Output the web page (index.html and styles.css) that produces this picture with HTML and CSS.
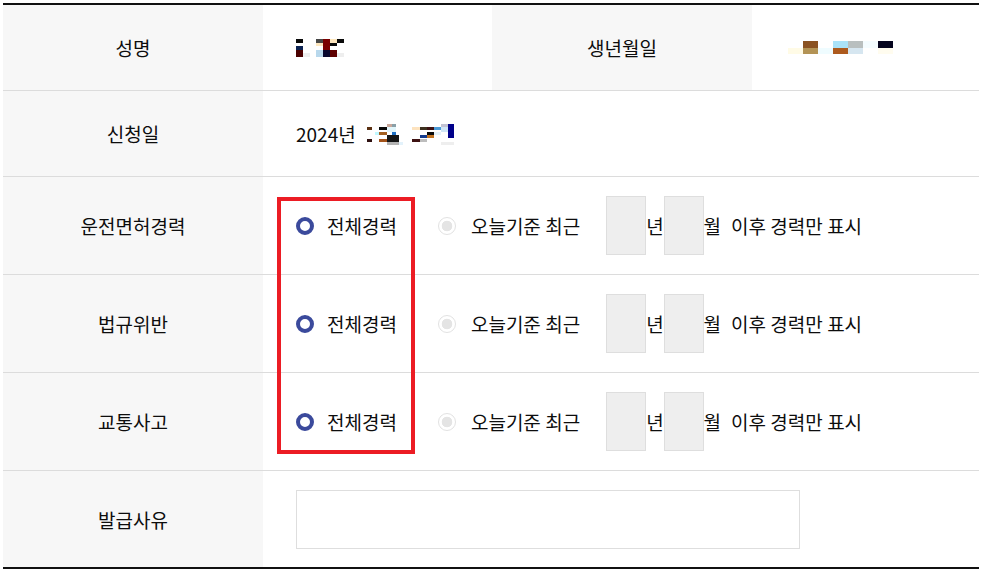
FILE: index.html
```html
<!DOCTYPE html>
<html lang="ko">
<head>
<meta charset="utf-8">
<title>운전경력증명서 발급</title>
<link rel="stylesheet" href="styles.css">
</head>
<body>
<div class="sheet">
  <div class="row row-short">
    <div class="th">성명</div>
    <div class="td">
      <svg class="mosaic" width="48" height="18" viewBox="0 0 48 18">
        <rect x="0" y="0" width="7" height="4" fill="#0a0a0a"/>
        <rect x="0" y="7" width="7" height="4" fill="#0b2252"/>
        <rect x="0" y="11" width="7" height="7" fill="#4a0000"/>
        <rect x="7" y="14" width="7" height="4" fill="#eeeeee"/>
        <rect x="20" y="0" width="7" height="4" fill="#474747"/>
        <rect x="20" y="4" width="7" height="3" fill="#fde6bd"/>
        <rect x="20" y="11" width="7" height="7" fill="#b8d8ec"/>
        <rect x="27" y="0" width="7" height="11" fill="#7a0000"/>
        <rect x="27" y="11" width="7" height="7" fill="#07072e"/>
        <rect x="34" y="0" width="7" height="4" fill="#fde6bd"/>
        <rect x="34" y="4" width="7" height="3" fill="#0a0a0a"/>
        <rect x="34" y="11" width="7" height="7" fill="#5e0000"/>
        <rect x="41" y="0" width="7" height="4" fill="#0a0a0a"/>
        <rect x="41" y="14" width="7" height="4" fill="#eeeeee"/>
      </svg>
    </div>
    <div class="th">생년월일</div>
    <div class="td td-birth">
      <svg class="mosaic" width="105" height="13" viewBox="0 0 105 13">
        <rect x="0" y="7" width="15" height="6" fill="#fffbe6"/>
        <rect x="15" y="0" width="15" height="7" fill="#8b5222"/>
        <rect x="15" y="7" width="15" height="6" fill="#b39355"/>
        <rect x="30" y="7" width="15" height="6" fill="#effcff"/>
        <rect x="45" y="0" width="15" height="7" fill="#aae2f8"/>
        <rect x="45" y="7" width="15" height="6" fill="#ad5a1e"/>
        <rect x="60" y="0" width="15" height="7" fill="#b9bfbf"/>
        <rect x="60" y="7" width="15" height="6" fill="#d6e6f0"/>
        <rect x="75" y="0" width="15" height="7" fill="#f4fcff"/>
        <rect x="90" y="0" width="15" height="7" fill="#05051e"/>
        <rect x="90" y="7" width="15" height="6" fill="#fffcef"/>
      </svg>
    </div>
  </div>

  <div class="row row-short">
    <div class="th">신청일</div>
    <div class="td span3">
      <span class="date-text">2024년</span>
      <svg class="mosaic mosaic-date" width="87" height="22" viewBox="0 0 87 22">
        <rect x="0" y="3" width="5" height="3" fill="#5a3012"/>
        <rect x="0" y="15" width="5" height="3" fill="#2e1010"/>
        <rect x="8" y="8" width="4" height="3" fill="#c2f8ff"/>
        <rect x="12" y="3" width="8" height="3" fill="#0a0a0a"/>
        <rect x="12" y="8" width="8" height="3" fill="#a36021"/>
        <rect x="12" y="15" width="8" height="3" fill="#a3531a"/>
        <rect x="20" y="0" width="5" height="3" fill="#c9a79a"/>
        <rect x="25" y="0" width="4" height="3" fill="#8aa0a8"/>
        <rect x="20" y="3" width="9" height="5" fill="#e2f6fb"/>
        <rect x="25" y="8" width="4" height="3" fill="#1d6fc4"/>
        <rect x="20" y="11" width="12" height="7" fill="#151515"/>
        <rect x="20" y="18" width="12" height="3" fill="#b3b3b3"/>
        <rect x="32" y="18" width="4" height="3" fill="#e3f2fb"/>
        <rect x="45" y="3" width="8" height="3" fill="#fde3bf"/>
        <rect x="45" y="15" width="8" height="3" fill="#3e1212"/>
        <rect x="53" y="3" width="7" height="3" fill="#3e3220"/>
        <rect x="53" y="11" width="7" height="3" fill="#133a8e"/>
        <rect x="53" y="15" width="7" height="3" fill="#bdbdbd"/>
        <rect x="60" y="3" width="7" height="3" fill="#3e1212"/>
        <rect x="60" y="8" width="7" height="3" fill="#0a0a0a"/>
        <rect x="60" y="11" width="7" height="3" fill="#c27422"/>
        <rect x="67" y="3" width="7" height="3" fill="#4a9ad6"/>
        <rect x="67" y="8" width="7" height="3" fill="#e4f2fa"/>
        <rect x="74" y="0" width="7" height="3" fill="#c3c3d3"/>
        <rect x="74" y="3" width="7" height="5" fill="#cfe6f6"/>
        <rect x="81" y="0" width="6" height="14" fill="#00008a"/>
        <rect x="74" y="18" width="13" height="3" fill="#eeeeee"/>
      </svg>
    </div>
  </div>

  <div class="row row-tall">
    <div class="th">운전면허경력</div>
    <div class="td span3 opts">
      <label class="opt opt-all"><input type="radio" name="license" checked><span>전체경력</span></label>
      <label class="opt opt-recent"><input type="radio" name="license" disabled><span>오늘기준 최근</span></label>
      <span class="box"></span><span>년</span><span class="box"></span><span>월</span><span class="tail">이후 경력만 표시</span>
    </div>
  </div>

  <div class="row row-tall">
    <div class="th">법규위반</div>
    <div class="td span3 opts">
      <label class="opt opt-all"><input type="radio" name="violation" checked><span>전체경력</span></label>
      <label class="opt opt-recent"><input type="radio" name="violation" disabled><span>오늘기준 최근</span></label>
      <span class="box"></span><span>년</span><span class="box"></span><span>월</span><span class="tail">이후 경력만 표시</span>
    </div>
  </div>

  <div class="row row-tall">
    <div class="th">교통사고</div>
    <div class="td span3 opts">
      <label class="opt opt-all"><input type="radio" name="accident" checked><span>전체경력</span></label>
      <label class="opt opt-recent"><input type="radio" name="accident" disabled><span>오늘기준 최근</span></label>
      <span class="box"></span><span>년</span><span class="box"></span><span>월</span><span class="tail">이후 경력만 표시</span>
    </div>
  </div>

  <div class="row row-last">
    <div class="th">발급사유</div>
    <div class="td span3">
      <div class="reason"></div>
    </div>
  </div>

  <div class="highlight"></div>
</div>
</body>
</html>
```

FILE: styles.css
```css
* {
  box-sizing: border-box;
}

html, body {
  margin: 0;
  padding: 0;
  background: #ffffff;
}

body {
  font-family: "Noto Sans CJK KR", "Noto Sans", sans-serif;
  font-size: 19px;
  color: #0d0d0d;
}

.sheet {
  position: relative;
  margin: 3px 0 0 3px;
  width: 976px;
  border-top: 2px solid #111111;
  border-bottom: 2px solid #111111;
}

.row {
  display: grid;
  grid-template-columns: 260px 229px 260px 227px;
  border-bottom: 1px solid #dcdcdc;
}

.row-short {
  height: 86px;
}

.row-tall {
  height: 98px;
}

.row-last {
  height: 96px;
  border-bottom: none;
}

.th {
  background: #f7f7f7;
  display: flex;
  align-items: center;
  justify-content: center;
  line-height: 1;
}

.td {
  background: #ffffff;
  display: flex;
  align-items: center;
  padding-left: 33px;
  line-height: 1;
}

.td-birth {
  padding-left: 36px;
}

.span3 {
  grid-column: 2 / 5;
}

.mosaic {
  display: block;
}

.date-text {
  margin-right: 11px;
}

.mosaic-date {
  margin-top: 2px;
}

.opts {
  word-spacing: -1px;
}

.opt {
  display: flex;
  align-items: center;
}

.opt input {
  appearance: none;
  -webkit-appearance: none;
  margin: 0;
  width: 18px;
  height: 18px;
  border-radius: 50%;
  flex: none;
}

.opt-all input {
  border: 4px solid #3b4a9c;
  background: #ffffff;
}

.opt-all span {
  margin-left: 13px;
}

.opt-recent {
  margin-left: 41px;
}

.opt-recent input {
  border: 1px solid #e2e2e2;
  background: radial-gradient(circle, #e4e4e4 0, #e4e4e4 5px, #ffffff 5.6px);
}

.opt-recent span {
  margin-left: 15px;
}

.box {
  width: 40px;
  height: 59px;
  background: #eeeeee;
  border: 1px solid #dedede;
  flex: none;
}

.opt-recent + .box {
  margin-left: 26px;
}

.tail {
  margin-left: 10px;
}

.reason {
  width: 504px;
  height: 59px;
  border: 1px solid #dedede;
  background: #ffffff;
}

.highlight {
  position: absolute;
  left: 274px;
  top: 192px;
  width: 138px;
  height: 257px;
  border: 4px solid #ec1c24;
  pointer-events: none;
}
```
